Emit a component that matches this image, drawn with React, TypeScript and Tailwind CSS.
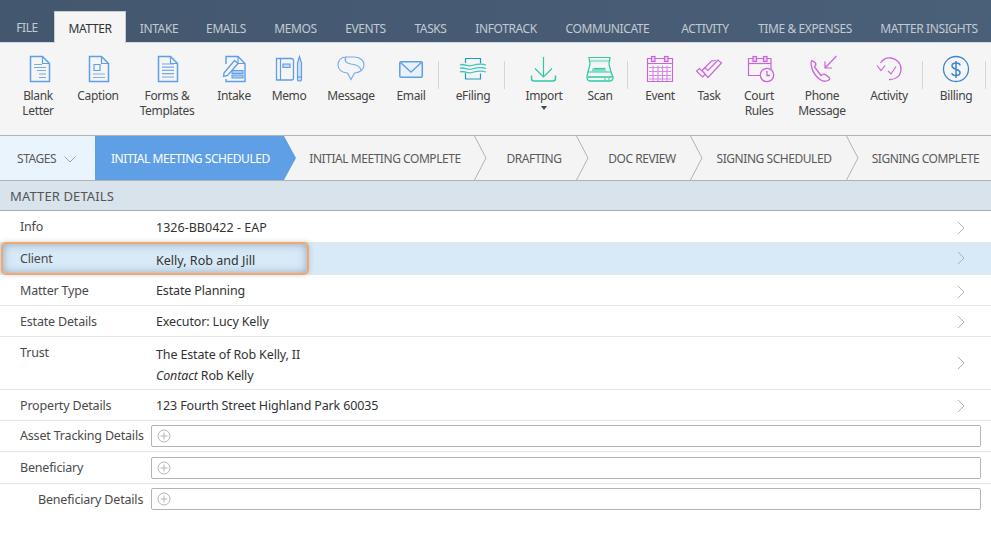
import React from "react";

const B = "#5f9fe8", T = "#2fc9a6", P = "#c965dc";

function Svg({ x, c, children, sw = 1.2 }: { x: number; c: string; children: React.ReactNode; sw?: number }) {
  return (
    <svg width="36" height="30" viewBox={`${x} 54 36 30`} fill="none" stroke={c} strokeWidth={sw} className="block shrink-0 overflow-visible">
      {children}
    </svg>
  );
}
const Page = ({ l, r }: { l: number; r: number }) => (
  <>
    <path d={`M${l} 56.5H${r - 7}L${r} 63.5V81.5H${l}Z`} strokeWidth="1.5" />
    <path d={`M${r - 7} 56.5V63.5H${r}`} />
  </>
);

const icons: Record<string, React.ReactNode> = {
  blank: (
    <Svg x={20} c={B}>
      <Page l={30.5} r={49.5} />
      <path d="M34 64.5H42M34 67.5H46M37 70.5H46M39 74H46M39 77.5H46" strokeWidth="1.1" opacity=".85" />
    </Svg>
  ),
  caption: (
    <Svg x={80} c={B}>
      <Page l={89.5} r={108.5} />
      <path d="M94 64.5H100V70.5H94Z" strokeWidth="1.2" />
      <path d="M93 74H105M93 77.5H105" opacity=".8" />
    </Svg>
  ),
  forms: (
    <Svg x={149} c={B}>
      <Page l={158.5} r={177.5} />
      <path d="M162 64H174M162 67.2H174M162 70.4H174M162 73.6H174M162 77H174" opacity=".85" />
    </Svg>
  ),
  intake: (
    <Svg x={216} c={B}>
      <path d="M226 64V56.5H238L245 63.5V81.5H226V79" strokeWidth="1.4" />
      <path d="M238 56.5V63.5H245" />
      <path d="M224 73L234.500 60.500L238 63.500L227.500 75.500L223.500 76.500Z" strokeWidth="1.3" fill="#f5f5f5" />
      <path d="M232 70.500H243V73.500H232ZM232 75H243V78H232Z" fill="#a9cbf3" strokeWidth="1.1" />
    </Svg>
  ),
  memo: (
    <Svg x={271} c={B}>
      <path d="M276.500 58.500H291.500Q293.500 58.500 293.500 60.500V78Q293.500 80 291.500 80H276.500Z" strokeWidth="1.3" />
      <path d="M280.500 58.500V80" />
      <path d="M283 64H290V67.500H283Z" fill="#c3daf6" />
      <path d="M297.500 63L299.500 56.500L301.500 63V79Q301.500 81 299.500 81Q297.500 81 297.500 79Z" fill="#cfe1f7" />
      <path d="M297.500 77H301.500" />
    </Svg>
  ),
  message: (
    <Svg x={333} c="#79aeec">
      <path d="M346 57H354C360 57 364 60.500 364 65C364 69.500 360 72.500 355 73H354.500L351 79.500L347.500 73C342 72.500 338 69.500 338 65C338 60.500 341 57 346 57Z" strokeWidth="1.2" />
      <path d="M346 57C343.500 61 347 63.500 351 64C356 64.500 360 66 361 70" />
    </Svg>
  ),
  email: (
    <Svg x={393} c={B}>
      <rect x="399.800" y="61.800" width="22.500" height="15.500" rx="1.200" strokeWidth="1.500" fill="#e9f1fb" />
      <path d="M400.500 62.500L411 72L421.500 62.500" strokeWidth="1.300" />
    </Svg>
  ),
  efiling: (
    <Svg x={455} c="#1f9dbb">
      <path d="M465.500 63V58.500H480.500V63.500M465.500 73V79H480.500V73.500" />
      <g stroke="#3fc6bb" strokeWidth="1.300">
        <path d="M460 65C464 63 467 67 472 65.500C477 64 481 63 486 65" />
        <path d="M460 68.500C464 66.500 467 70.500 472 69C477 67.500 481 66.500 486 68.500" />
        <path d="M460 72C464 70 467 74 472 72.500C477 71 481 70 486 72" />
      </g>
    </Svg>
  ),
  import: (
    <Svg x={526} c={T}>
      <path d="M543.500 57V77M535 68.500L543.500 77L552 68.500" strokeWidth="1.200" />
      <path d="M531.500 75.500V78.500Q531.500 81 534 81H553Q555.500 81 555.500 78.500V75.500" strokeWidth="1.400" />
    </Svg>
  ),
  scan: (
    <Svg x={583} c={T}>
      <path d="M590 57.500H611L610 64L612 72H589L591 64Z" strokeWidth="1.200" />
      <path d="M591 61H610" opacity=".4" strokeWidth="2.500" />
      <path d="M593 68.500L595 69H606L608 72H593Z" fill="#7fdcc6" stroke="none" />
      <path d="M594.500 68.500H606.500" />
      <path d="M589 72L588 76.500Q588 81 591 81H611Q614 81 614 77L612 72M589 77H613" strokeWidth="1.300" />
      <path d="M605 79H607M609 79H611" strokeWidth=".9" />
    </Svg>
  ),
  event: (
    <Svg x={642} c={P}>
      <path d="M647.500 58.500H672.500V81.500H647.500ZM647.500 63.500H672.500" strokeWidth="1.200" />
      <rect x="651.500" y="56.500" width="3.500" height="5" fill="#e9c7f0" />
      <rect x="664.500" y="56.500" width="3.500" height="5" fill="#e9c7f0" />
      <path d="M649 67.500H671M649 71.500H671M649 75.500H671M649 79H671M653 65.500V81M658 65.500V81M662.500 65.500V81M667 65.500V81" strokeWidth="1.100" opacity=".75" />
    </Svg>
  ),
  task: (
    <Svg x={691} c={P}>
      <path d="M702 70.500L705 67.500L708 70.500L718 60L721.500 63L708 77.500Z" strokeWidth="1.200" />
      <path d="M702 71L699.500 68.500L696.500 71L702.500 77L705 74.500" strokeWidth="1.200" />
      <path d="M703.500 69L711.500 61L716 60.500" strokeWidth="1.200" />
    </Svg>
  ),
  court: (
    <Svg x={741} c={P}>
      <path d="M760 75.500H748.500V58.500H771V70" strokeWidth="1.200" />
      <path d="M748.500 63.500H771" strokeWidth="1.200" />
      <rect x="753" y="56.500" width="3.500" height="5" fill="#e9c7f0" />
      <rect x="763.500" y="56.500" width="3.500" height="5" fill="#e9c7f0" />
      <circle cx="767" cy="75" r="6.700" strokeWidth="1.300" />
      <path d="M767 71V75.500H770" strokeWidth="1.300" />
    </Svg>
  ),
  phone: (
    <Svg x={804} c={P}>
      <path d="M812 60.500L815 62.500C816 63.500 816 65 815 66L814.500 67L821 75.500L822.500 74.500C823.500 74 825 74 826 75L829 77.500C830 78.500 829.500 80 828 80.500C826 81.500 823 81.500 820 79.500C816 76.500 813 72 812 68.500C811 65 810 62 812 60.500Z" strokeWidth="1.300" />
      <path d="M836.500 56L825 68M825 61.500V68H832" strokeWidth="1.200" />
    </Svg>
  ),
  activity: (
    <Svg x={871} c={P}>
      <path d="M880.500 63C883 59 887 57.500 891 58C896 58.800 901 62.500 901 69C901 75.500 896 80 889 79.500" strokeWidth="1.300" />
      <path d="M877 65.500L881 70.500L885 65.500" strokeWidth="1.200" />
      <path d="M888 71L891 74L896 66.500" strokeWidth="1.100" />
    </Svg>
  ),
  billing: (
    <Svg x={938} c="#3f86d0">
      <circle cx="956" cy="69" r="12.500" strokeWidth="1.300" />
      <path d="M960 65.500C960 64 958.500 63 956 63C953.500 63 952 64.200 952 66C952 70 960 68.500 960 72.500C960 74.300 958.500 75.500 956 75.500C953.500 75.500 952 74.500 952 73M956 61V78" strokeWidth="1.500" />
    </Svg>
  ),
};

const tabs: [string, number][] = [
  ["FILE", 54], ["MATTER", 72], ["INTAKE", 66], ["EMAILS", 68], ["MEMOS", 71], ["EVENTS", 69], ["TASKS", 61],
  ["INFOTRACK", 90], ["COMMUNICATE", 116], ["ACTIVITY", 76], ["TIME & EXPENSES", 124], ["MATTER INSIGHTS", 124],
];

function Tool({ id, w, ml = 0, label, caret }: { id: string; w: string; ml?: number; label: string[]; caret?: boolean }) {
  return (
    <div className={`flex flex-col items-center shrink-0 ${w}`} style={ml ? { marginLeft: ml } : undefined}>
      <div className="h-[30px] mt-[11px] flex justify-center">{icons[id]}</div>
      <div className="mt-[4px] text-[12px] leading-[15px] text-[#444] text-center whitespace-nowrap tracking-[-0.35px]">
        {label.map((l) => (
          <div key={l}>{l}</div>
        ))}
        {caret && <div className="mx-auto mt-[3px] w-0 h-0 border-x-[3px] border-x-transparent border-t-[4px] border-t-[#444]" />}
      </div>
    </div>
  );
}
const Sep = ({ ml = 0 }: { ml?: number }) => (
  <div className="w-px h-[28px] mt-[18px] bg-[#d6d6d6] shrink-0" style={ml ? { marginLeft: ml } : undefined} />
);

const stages: [string, string, string][] = [
  ["INITIAL MEETING COMPLETE", "w-[190px]", "pl-[12px]"],
  ["DRAFTING", "w-[102px]", "pl-[18px]"],
  ["DOC REVIEW", "w-[114px]", "pl-[18px]"],
  ["SIGNING SCHEDULED", "w-[156px]", "pl-[12px]"],
  ["SIGNING COMPLETE", "w-[145px]", "pl-[14px]"],
];

const Chevron = ({ up = 0 }: { up?: number }) => (
  <svg width="8" height="14" viewBox="0 0 8 14" fill="none" stroke="#b0b0b0" strokeWidth="1" className="shrink-0" style={up ? { marginTop: -up * 2 } : undefined}>
    <path d="M1 1L7 7L1 13" />
  </svg>
);

function Row({ label, value, h, labelUp = 0, chevUp = 0, track = "tracking-[-0.14px]" }: { label: string; value: React.ReactNode; h: string; labelUp?: number; chevUp?: number; track?: string }) {
  return (
    <div className={`flex items-center border-b border-[#e6e6e6] ${h}`}>
      <div className="w-[156px] pl-[20px] shrink-0 text-[12.5px] text-[#4a4a4a] tracking-[-0.18px]" style={labelUp ? { marginTop: -labelUp } : undefined}>
        {label}
      </div>
      <div className={`flex-1 text-[12.5px] text-[#333] ${track}`}>{value}</div>
      <div className="w-[34px] shrink-0 flex items-center">
        <Chevron up={chevUp} />
      </div>
    </div>
  );
}

function AddRow({ label, indent, h, labelClass = "" }: { label: string; indent?: boolean; h: string; labelClass?: string }) {
  return (
    <div className={`flex items-center ${indent ? "" : "border-b border-[#e6e6e6]"} ${h}`}>
      <div className={`w-[151px] shrink-0 text-[12.5px] text-[#4a4a4a] tracking-[-0.18px] whitespace-nowrap ${indent ? "pl-[38px]" : "pl-[20px]"} ${labelClass}`}>{label}</div>
      <div className="w-[830px] h-[22px] border border-[#b4b4b4] rounded-[2px] bg-white flex items-center pl-[5px]">
        <svg width="14" height="14" viewBox="0 0 14 14" fill="none" stroke="#b5b5b5" strokeWidth="1">
          <circle cx="7" cy="7" r="6" />
          <path d="M7 3.500V10.500M3.500 7H10.500" />
        </svg>
      </div>
    </div>
  );
}

export default function App() {
  return (
    <div className="relative w-[991px] h-[534px] overflow-hidden bg-white font-['Open_Sans',sans-serif] text-[12px]">
      <div className="flex h-[42px] items-end bg-gradient-to-r from-[#43586f] to-[#4a5f78] border-b border-[#d4d8dc] box-content">
        {tabs.map(([t, w]) =>
          t === "MATTER" ? (
            <div key={t} className="h-[32px] -mb-px pt-[2px] flex items-center justify-center bg-[#f5f5f5] border border-b-0 border-[#c8ccd0] text-[#333] tracking-[-0.4px] shrink-0" style={{ width: w }}>
              {t}
            </div>
          ) : (
            <div
              key={t}
              className={`h-[30px] flex items-center justify-center text-[#c2cad3] tracking-[-0.4px] shrink-0 whitespace-nowrap ${t === "FILE" ? "pt-[2px]" : t === "COMMUNICATE" ? "pt-[3px] pr-[3px]" : "pt-[3px]"}`}
              style={{ width: w }}
            >
              {t}
            </div>
          ),
        )}
      </div>
      <div className="flex h-[92px] bg-[#f5f5f5] pl-[8px]">
        <Tool id="blank" w="w-[60px]" label={["Blank", "Letter"]} />
        <Tool id="caption" w="w-[60px]" label={["Caption"]} />
        <Tool id="forms" w="w-[78px]" label={["Forms &", "Templates"]} />
        <Tool id="intake" w="w-[56px]" label={["Intake"]} />
        <Tool id="memo" w="w-[54px]" label={["Memo"]} />
        <Tool id="message" w="w-[70px]" label={["Message"]} />
        <Tool id="email" w="w-[50px]" label={["Email"]} />
        <Sep ml={2} />
        <Tool id="efiling" w="w-[62px]" ml={3} label={["eFiling"]} />
        <Sep />
        <Tool id="import" w="w-[78px]" label={["Import"]} caret />
        <Tool id="scan" w="w-[34px]" label={["Scan"]} />
        <Sep ml={10} />
        <Tool id="event" w="w-[64px]" label={["Event"]} />
        <Tool id="task" w="w-[34px]" label={["Task"]} />
        <Tool id="court" w="w-[66px]" label={["Court", "Rules"]} />
        <Tool id="phone" w="w-[60px]" label={["Phone", "Message"]} />
        <Tool id="activity" w="w-[66px]" ml={4} label={["Activity"]} />
        <Sep />
        <Tool id="billing" w="w-[58px]" ml={4} label={["Billing"]} />
        <Sep />
      </div>
      <div className="flex h-[46px] bg-[#f4f4f4] border-y border-[#b2b2b2] text-[#5a5a5a] tracking-[-0.45px]">
        <div className="w-[95px] flex items-center pl-[17px] pt-[2px] gap-[8px] bg-[#e9f4fd] shrink-0">
          STAGES
          <svg width="12" height="7" viewBox="0 0 12 7" fill="none" stroke="#9aa3ab" strokeWidth="1">
            <path d="M.5 .5L6 6L11.500 .5" />
          </svg>
        </div>
        <div className="relative w-[189px] flex items-center pl-[16px] pt-[2px] bg-[#5e9fe6] text-white shrink-0 whitespace-nowrap">
          INITIAL MEETING SCHEDULED
          <svg width="12" height="44" viewBox="0 0 12 44" className="absolute left-full top-0 z-10">
            <path d="M0 0L12 22L0 44Z" fill="#5e9fe6" />
          </svg>
        </div>
        {stages.map(([s, w, p], i) => (
          <div key={s} className={`relative flex items-center justify-center pt-[2px] shrink-0 whitespace-nowrap ${w} ${p}`}>
            {s}
            {i < 4 && (
              <svg width="13" height="44" viewBox="0 0 13 44" fill="none" stroke="#b2b2b2" className="absolute left-full top-0 z-10">
                <path d="M.5 0L12 22L.5 44" />
              </svg>
            )}
          </div>
        ))}
      </div>
      <div className="h-[30px] flex items-center pl-[10px] pt-[2px] bg-[#d8e3ec] border-b border-[#ababab] text-[13px] text-[#555] tracking-[0.12px]">MATTER DETAILS</div>
      <Row label="Info" value="1326-BB0422 - EAP" h="h-[32px] pt-[4px]" labelUp={2} chevUp={1} track="tracking-[0.02px]" />
      <Row label="Client" value="Kelly, Rob and Jill" h="h-[32px] pt-[5px] bg-[#d8e9f7]" labelUp={4} chevUp={3} track="tracking-[0.02px]" />
      <Row label="Matter Type" value="Estate Planning" h="h-[31px] pt-[3px]" />
      <Row label="Estate Details" value="Executor: Lucy Kelly" h="h-[31px] pt-[2px]" />
      <div className="flex border-b border-[#e6e6e6] h-[53px]">
        <div className="w-[156px] pl-[20px] pt-[7px] shrink-0 text-[12.5px] text-[#4a4a4a] tracking-[-0.18px]">Trust</div>
        <div className="flex-1 pt-[7px] text-[12.5px] leading-[21px] text-[#333] tracking-[-0.14px]">
          <div>The Estate of Rob Kelly, II</div>
          <div>
            <i>Contact</i> Rob Kelly
          </div>
        </div>
        <div className="w-[34px] shrink-0 flex items-center">
          <Chevron />
        </div>
      </div>
      <Row label="Property Details" value="123 Fourth Street Highland Park 60035" h="h-[31px] pt-[2px]" />
      <AddRow label="Asset Tracking Details" h="h-[31px]" labelClass="mt-[1px]" />
      <AddRow label="Beneficiary" h="h-[32px]" labelClass="mt-[2px]" />
      <AddRow label="Beneficiary Details" indent h="h-[31px] pb-[2px]" labelClass="mt-[4px]" />
      <div className="absolute left-[1px] top-[242px] w-[308px] h-[33px] rounded-[5px] border-2 border-[#f4a766] shadow-[inset_0_0_8px_rgba(80,110,140,.55),0_0_5px_rgba(80,110,140,.3)]" />
    </div>
  );
}
